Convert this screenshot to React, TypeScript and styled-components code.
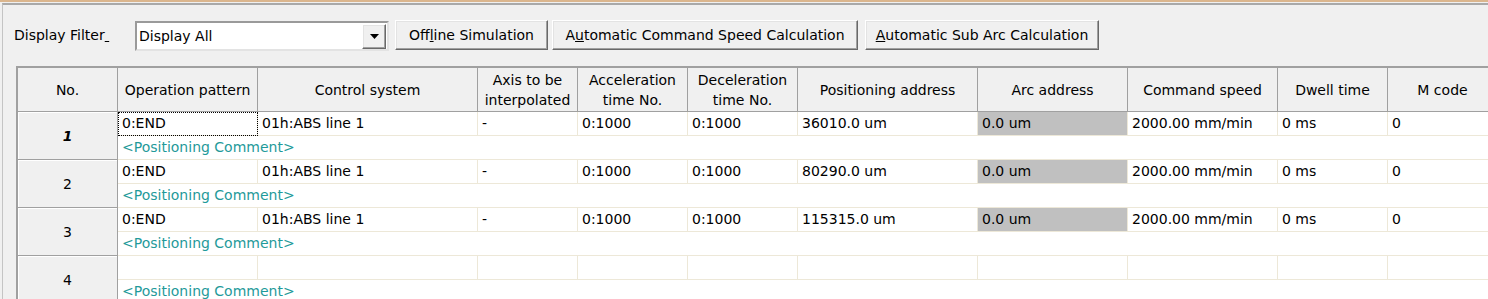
import React from "react";
import styled, { createGlobalStyle, css } from "styled-components";

const GlobalStyle = createGlobalStyle`
  * { box-sizing: border-box; }
  html, body { margin: 0; padding: 0; background: #f0f0f0; }
  body {
    font-family: "DejaVu Sans", Tahoma, "Liberation Sans", sans-serif;
    font-size: 14px;
    color: #000;
  }
`;

const Frame = styled.div`
  width: 1488px;
  height: 299px;
  overflow: hidden;
  border-top: 2px solid #dbb68e;
  background: #f0f0f0;
`;

const Panel = styled.div`
  margin: 1px 0 0 2px;
  border-top: 2px solid #a9a9a9;
  border-left: 1px solid #c4c4c4;
  height: 100%;
`;

const Toolbar = styled.div`
  display: flex;
  align-items: flex-start;
  height: 31px;
  margin-top: 15px;
  padding-left: 11px;
`;

const Label = styled.div`
  width: 121px;
  line-height: 31px;
  white-space: pre;
`;

const Combo = styled.div`
  display: flex;
  align-items: center;
  width: 254px;
  height: 30px;
  margin-top: 1px;
  background: #fff;
  border-style: solid;
  border-width: 2px;
  border-color: #9a9a9a #e3e3e3 #e3e3e3 #9a9a9a;
  padding: 0 1px 0 2px;
`;

const ComboText = styled.div`
  flex: 1;
`;

const raised = css`
  background: #f0f0f0;
  border-style: solid;
  border-width: 1px;
  border-color: #ffffff #696969 #696969 #ffffff;
  box-shadow: inset -1px -1px 0 #a0a0a0, inset 1px 1px 0 #e3e3e3;
`;

const DropButton = styled.div`
  ${raised};
  width: 24px;
  height: 25px;
  display: flex;
  align-items: center;
  justify-content: center;
`;

const Button = styled.div<{ $width: number; $gap: number }>`
  ${raised};
  width: ${p => p.$width}px;
  height: 30px;
  margin-left: ${p => p.$gap}px;
  display: flex;
  align-items: center;
  justify-content: center;
  white-space: nowrap;
`;

const Table = styled.div`
  display: grid;
  grid-template-columns: 100px 140px 220px 100px 110px 110px 180px 150px 150px 110px 110px;
  grid-template-rows: 44px;
  grid-auto-rows: 24px;
  width: max-content;
  margin: 15px 0 0 13px;
  border-top: 2px solid #a0a0a0;
  border-left: 2px solid #a0a0a0;
  background: #fff;
`;

const HeaderCell = styled.div`
  display: flex;
  align-items: center;
  justify-content: center;
  text-align: center;
  line-height: 20px;
  background: #f0f0f0;
  border-right: 1px solid #a0a0a0;
  border-bottom: 1px solid #a0a0a0;
  white-space: nowrap;
`;

const RowHead = styled.div<{ $current?: boolean }>`
  grid-column: 1;
  grid-row: span 2;
  display: flex;
  align-items: center;
  justify-content: center;
  background: #f0f0f0;
  border-right: 1px solid #a0a0a0;
  border-bottom: 1px solid #a0a0a0;
  box-shadow: inset 1px 1px 0 #fff;
  ${p => p.$current && css`
    font-weight: bold;
    font-style: italic;
  `}
`;

const DataCell = styled.div<{ $shaded?: boolean; $focused?: boolean }>`
  padding-left: 4px;
  line-height: 23px;
  white-space: nowrap;
  overflow: hidden;
  border-right: 1px solid #ede8d8;
  border-bottom: 1px solid #ede8d8;
  background: ${p => (p.$shaded ? "#c0c0c0" : "#fff")};
  ${p => p.$focused && css`
    outline: 1px dotted #000;
    outline-offset: -1px;
  `}
`;

const CommentCell = styled.div`
  grid-column: 2 / -1;
  padding-left: 4px;
  line-height: 23px;
  color: #1f9a9a;
  border-bottom: 1px solid #ede8d8;
`;

const Mnemonic = styled.span`
  text-decoration: underline;
`;

const headers: React.ReactNode[] = [
  "No.",
  "Operation pattern",
  "Control system",
  <>Axis to be<br />interpolated</>,
  <>Acceleration<br />time No.</>,
  <>Deceleration<br />time No.</>,
  "Positioning address",
  "Arc address",
  "Command speed",
  "Dwell time",
  "M code",
];

type Point = {
  no: number;
  values: string[] | null;
};

const points: Point[] = [
  { no: 1, values: ["0:END", "01h:ABS line 1", "-", "0:1000", "0:1000", "36010.0 um", "0.0 um", "2000.00 mm/min", "0 ms", "0"] },
  { no: 2, values: ["0:END", "01h:ABS line 1", "-", "0:1000", "0:1000", "80290.0 um", "0.0 um", "2000.00 mm/min", "0 ms", "0"] },
  { no: 3, values: ["0:END", "01h:ABS line 1", "-", "0:1000", "0:1000", "115315.0 um", "0.0 um", "2000.00 mm/min", "0 ms", "0"] },
  { no: 4, values: null },
];

export default function App() {
  return (
    <Frame>
      <GlobalStyle />
      <Panel>
        <Toolbar>
          <Label>Display Filter<Mnemonic> </Mnemonic></Label>
          <Combo>
            <ComboText>Display All</ComboText>
            <DropButton>
              <svg width="9" height="5" viewBox="0 0 9 5">
                <path d="M0 0h9L4.5 5z" fill="#000" />
              </svg>
            </DropButton>
          </Combo>
          <Button $width={153} $gap={6}>Off<Mnemonic>l</Mnemonic>ine Simulation</Button>
          <Button $width={306} $gap={4}>A<Mnemonic>u</Mnemonic>tomatic Command Speed Calculation</Button>
          <Button $width={234} $gap={7}><Mnemonic>A</Mnemonic>utomatic Sub Arc Calculation</Button>
        </Toolbar>
        <Table>
          {headers.map((h, i) => (
            <HeaderCell key={i}>{h}</HeaderCell>
          ))}
          {points.map(pt => (
            <React.Fragment key={pt.no}>
              <RowHead $current={pt.no === 1}>{pt.no}</RowHead>
              {(pt.values ?? Array(10).fill("")).map((v, i) => (
                <DataCell
                  key={i}
                  $shaded={i === 6 && pt.values !== null}
                  $focused={pt.no === 1 && i === 0}
                >
                  {v}
                </DataCell>
              ))}
              <CommentCell>&lt;Positioning Comment&gt;</CommentCell>
            </React.Fragment>
          ))}
        </Table>
      </Panel>
    </Frame>
  );
}
